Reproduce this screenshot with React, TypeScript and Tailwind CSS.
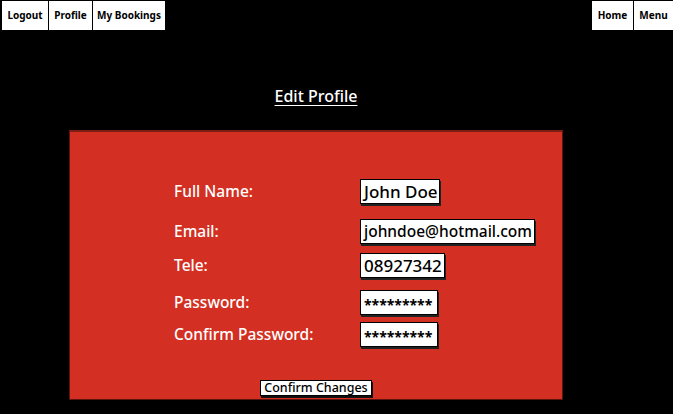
import React from "react";

const font = { fontFamily: '"Noto Sans", "Open Sans", sans-serif' };

function NavBtn({ label, w }: { label: string; w: string }) {
  return (
    <div
      className={`h-[29px] ${w} bg-white border-l border-black flex items-center justify-center text-[10px] font-bold text-black first:border-l-0`}
    >
      {label}
    </div>
  );
}

function Field({
  label,
  value,
  w,
  mt,
  size,
  stars,
}: {
  label: string;
  value: string;
  w: string;
  mt: string;
  size: string;
  stars?: boolean;
}) {
  return (
    <div className={`flex items-center h-[25px] ${mt}`}>
      <div className="w-[186px] text-white text-[15.5px] font-medium leading-none">{label}</div>
      <div
        className={`${w} h-[25px] bg-white border border-black shadow-[1px_2px_0_#222] flex items-center pl-[3px] text-black ${size} ${
          stars ? "font-bold pt-[5px]" : "font-medium"
        } leading-none overflow-hidden whitespace-nowrap`}
      >
        {value}
      </div>
    </div>
  );
}

export default function App() {
  return (
    <div className="w-[673px] h-[414px] bg-black overflow-hidden" style={font}>
      <div className="flex justify-between pt-px pl-[2px]">
        <div className="flex">
          <NavBtn label="Logout" w="w-[46px]" />
          <NavBtn label="Profile" w="w-[44px]" />
          <NavBtn label="My Bookings" w="w-[73px]" />
        </div>
        <div className="flex">
          <NavBtn label="Home" w="w-[41px]" />
          <NavBtn label="Menu" w="w-[40px]" />
        </div>
      </div>
      <div className="ml-[69px] w-[494px]">
        <div className="mt-[54px] h-[24px] flex items-center justify-center">
          <span className="text-white text-[16px] font-medium underline underline-offset-[3px]">
            Edit Profile
          </span>
        </div>
        <div className="mt-[22px] h-[270px] bg-[#d32f22] border border-[#5c140e] border-t-2 border-t-[#7d1d14] flex flex-col pl-[104px]">
          <Field label="Full Name:" value="John Doe" w="w-[80px]" mt="mt-[47px]" size="text-[17px]" />
          <Field label="Email:" value="johndoe@hotmail.com" w="w-[175px]" mt="mt-[15px]" size="text-[15.5px]" />
          <Field label="Tele:" value="08927342" w="w-[85px]" mt="mt-[9px]" size="text-[17px]" />
          <Field label="Password:" value="*********" w="w-[78px]" mt="mt-[12px]" size="text-[14px]" stars />
          <Field label="Confirm Password:" value="*********" w="w-[78px]" mt="mt-[7px]" size="text-[14px]" stars />
          <div className="mt-[33px] -ml-[104px] flex justify-center">
            <div className="w-[112px] h-[16px] bg-white border border-black shadow-[1px_2px_0_#111] flex items-center justify-center text-[12.5px] font-medium text-black leading-none">
              Confirm Changes
            </div>
          </div>
        </div>
      </div>
    </div>
  );
}
